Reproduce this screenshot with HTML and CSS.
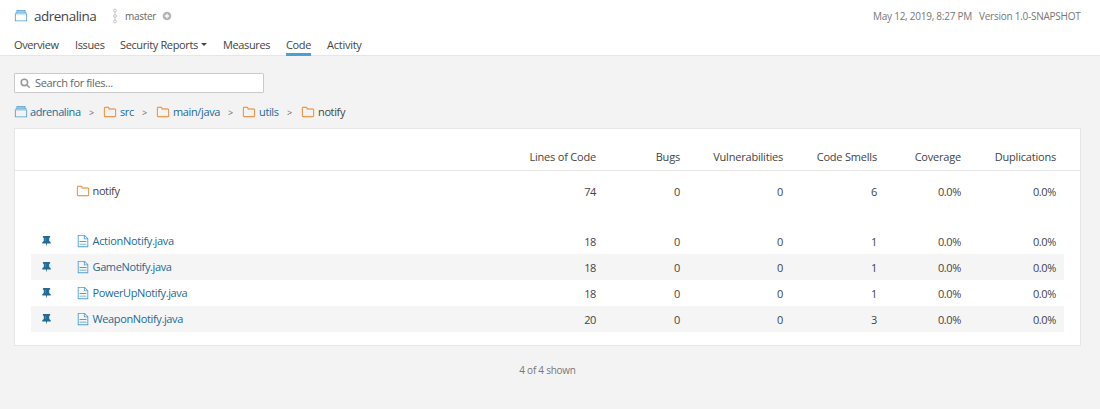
FILE: index.html
```html
<!DOCTYPE html>
<html lang="en">
<head>
<meta charset="utf-8">
<title>adrenalina - Code</title>
<link rel="stylesheet" href="styles.css">
</head>
<body>
<svg width="0" height="0" class="defs">
  <symbol id="project" viewBox="0 0 16 16"><path fill="currentColor" d="M14.985 13.988L1 14.005 1.02 5h13.966v8.988h-.001zM1.998 5.995l.006 7.02L14.022 13 14 6.004l-12.002-.009zM3 4.5V4h9.996l.004.5h1l-.005-1.497-11.98.003L2 4.5h1zm1-2v-.504h8.002L12 2.5h.996l-.003-1.495-10.019.002L3 2.5h1z"/><path fill="currentColor" fill-opacity=".4" d="M3 2h10v2H3z"/></symbol>
  <symbol id="folder" viewBox="0 0 16 16"><path fill="currentColor" d="M14 12.286V5.703a.673.673 0 0 0-.195-.5.694.694 0 0 0-.5-.203H7.014a.694.694 0 0 1-.5-.203.686.686 0 0 1-.203-.5v-.6a.686.686 0 0 0-.203-.5.694.694 0 0 0-.5-.197H2.703a.694.694 0 0 0-.5.203.673.673 0 0 0-.203.5v8.583c0 .196.067.363.203.5.136.136.302.203.5.203h10.602a.694.694 0 0 0 .5-.203.673.673 0 0 0 .195-.5zM15 5.703v6.583c0 .466-.167.867-.5 1.2-.334.333-.735.5-1.203.5H2.703c-.468 0-.869-.167-1.203-.5a1.64 1.64 0 0 1-.5-1.200V3.703c0-.469.167-.871.5-1.203.334-.333.735-.5 1.203-.5h2.905c.469 0 .87.167 1.204.5.333.332.5.734.5 1.203V4h5.985c.468 0 .869.167 1.203.5.333.334.5.735.5 1.203z"/></symbol>
  <symbol id="file" viewBox="0 0 16 16"><path fill="currentColor" d="M14 15H2V1.010h7.970L14 5.003V15zM9 2H3v12h10V6H9V2zm3 9v1H4v-1h8zm0-3v1H4V8h8zM10 2.200V5h2.800L10 2.200z" fill-rule="evenodd"/></symbol>
  <symbol id="pin" viewBox="0 0 10 12"><path fill="currentColor" d="M1 0h8v1.700H8v3.800l1.700 1.300v1.400H5.600L5 11.500l-.6-3.300H.3V6.800L2 5.500V1.700H1z"/><path stroke="#fff" stroke-opacity=".35" stroke-width=".6" d="M4 2v3.500"/></symbol>
</svg>
<header class="header">
  <div class="top">
    <svg class="icon blue"><use href="#project"/></svg>
    <h1 class="title">adrenalina</h1>
    <svg class="branch" viewBox="0 0 6 16"><g fill="none" stroke="#c4c4c4"><circle cx="3" cy="2.500" r="1.400"/><circle cx="3" cy="8" r="1.400"/><circle cx="3" cy="13.500" r="1.400"/><path d="M3 4v2.500M3 9.500V12"/></g></svg>
    <span class="master">master</span>
    <svg class="plus" viewBox="0 0 10 10"><circle cx="5" cy="5" r="4.300" fill="#b4b4b4"/><path stroke="#fff" stroke-width="1.300" d="M5 2.800v4.400M2.800 5h4.400"/></svg>
    <span class="date">May 12, 2019, 8:27 PM</span>
    <span class="version">Version 1.0-SNAPSHOT</span>
  </div>
  <nav class="nav">
    <a class="n-overview">Overview</a><a class="n-issues">Issues</a><a class="n-reports">Security Reports<i class="caret"></i></a><a class="n-measures">Measures</a><a class="n-code active">Code</a><a class="n-activity">Activity</a>
  </nav>
</header>
<main class="main">
  <div class="search">
    <svg class="lens" viewBox="0 0 12 12"><g fill="none" stroke="#999" stroke-width="1.700"><circle cx="4.800" cy="4.800" r="3.500"/><path d="M7.400 7.400l3.200 3.200"/></g></svg>
    <span>Search for files...</span>
  </div>
  <div class="crumbs">
    <svg class="icon blue"><use href="#project"/></svg><a class="c-project">adrenalina</a><span class="sep">&gt;</span>
    <svg class="icon orange"><use href="#folder"/></svg><a class="c-src">src</a><span class="sep">&gt;</span>
    <svg class="icon orange"><use href="#folder"/></svg><a class="c-java">main/java</a><span class="sep">&gt;</span>
    <svg class="icon orange"><use href="#folder"/></svg><a class="c-utils">utils</a><span class="sep">&gt;</span>
    <svg class="icon orange"><use href="#folder"/></svg><span>notify</span>
  </div>
  <section class="panel">
    <div class="row head"><span></span><span></span><b>Lines of Code</b><b>Bugs</b><b>Vulnerabilities</b><b>Code Smells</b><b>Coverage</b><b>Duplications</b></div>
    <div class="row folder"><span></span><span class="name"><svg class="icon orange"><use href="#folder"/></svg>notify</span><b>74</b><b>0</b><b>0</b><b>6</b><b>0.0%</b><b>0.0%</b></div>
    <div class="row"><svg class="pin"><use href="#pin"/></svg><a class="name action"><svg class="icon blue"><use href="#file"/></svg>ActionNotify.java</a><b>18</b><b>0</b><b>0</b><b>1</b><b>0.0%</b><b>0.0%</b></div>
    <div class="row stripe"><svg class="pin"><use href="#pin"/></svg><a class="name"><svg class="icon blue"><use href="#file"/></svg>GameNotify.java</a><b>18</b><b>0</b><b>0</b><b>1</b><b>0.0%</b><b>0.0%</b></div>
    <div class="row"><svg class="pin"><use href="#pin"/></svg><a class="name"><svg class="icon blue"><use href="#file"/></svg>PowerUpNotify.java</a><b>18</b><b>0</b><b>0</b><b>1</b><b>0.0%</b><b>0.0%</b></div>
    <div class="row stripe"><svg class="pin"><use href="#pin"/></svg><a class="name"><svg class="icon blue"><use href="#file"/></svg>WeaponNotify.java</a><b>20</b><b>0</b><b>0</b><b>3</b><b>0.0%</b><b>0.0%</b></div>
  </section>
  <div class="shown">4 of 4 shown</div>
</main>
</body>
</html>
```

FILE: styles.css
```css
* { box-sizing: border-box; }
body { margin: 0; height: 409px; overflow: hidden; background: #f3f3f3; color: #444; font: 11px/16px "Open Sans", "Noto Sans", sans-serif; letter-spacing: -.37px; white-space: nowrap; }
.defs { display: block; position: absolute; }
svg { display: block; flex: none; }
.icon { width: 14px; height: 14px; }
.blue { color: #4b9fd5; }
.orange { color: #ed7d20; }
a { color: #236a97; }
.header { height: 56px; background: #fff; border-bottom: 1px solid #e6e6e6; }
.top { display: flex; align-items: center; height: 32px; padding: 0 19px 0 14px; }
.title { width: 79px; margin: 0 0 0 6px; font-size: 13.5px; font-weight: 400; letter-spacing: -.5px; line-height: 20px; }
.branch { width: 6px; height: 16px; margin-right: 7px; margin-left: -1px; }
.master { width: 37px; font-size: 10px; letter-spacing: -.3px; color: #666; }
.plus { width: 10px; height: 10px; }
.date, .version { font-size: 10px; letter-spacing: -.25px; color: #777; }
.date { margin-left: auto; width: 99px; margin-right: 7px; }
.version { width: 102px; }
.nav { display: flex; gap: 16px; height: 24px; padding-left: 14px; }
.nav a { height: 24px; padding-top: 5px; color: #444; border-bottom: 3px solid transparent; }
.nav .active { border-color: #4b9fd5; }
.n-overview { width: 45px; }
.n-issues { width: 29px; }
.n-reports { display: flex; width: 87px; justify-content: space-between; }
.n-measures { width: 47px; }
.n-code { width: 25px; }
.nav .n-activity { letter-spacing: -.25px; }
.caret { width: 6px; height: 3px; margin-top: 6px; border: 3px solid transparent; border-top-color: #444; border-bottom: 0; }
.main { padding: 17px 19px 0 14px; }
.search { display: flex; align-items: center; width: 250px; height: 20px; padding-left: 5px; background: #fff; border: 1px solid #cacaca; color: #666; border-radius: 1px; }
.lens { width: 11px; height: 11px; margin-right: 4px; }
.crumbs { display: flex; align-items: center; height: 16px; margin-top: 11px; }
.crumbs .icon { margin: 0 3px 0 -1px; }
.crumbs .icon.blue { margin: 0 2px 0 0; }
.sep { width: 23px; padding: 1px 0 0 8px; font-size: 9px; color: #666; letter-spacing: 0; }
.c-project { width: 51px; letter-spacing: -.42px; }
.c-src { width: 14px; }
.c-java { width: 47px; }
.c-utils { width: 20px; }
.panel { height: 218px; margin-top: 8px; background: #fff; border: 1px solid #e6e6e6; }
.row { display: grid; grid-template-columns: 46px 423px 96px 84px 103px 94px 84px 95px; align-items: center; height: 26px; margin: 0 16px; }
.row b { padding-top: 1px; font-weight: 400; text-align: right; }
.head { height: 42px; margin: 0; padding: 14px 0 0 16px; border-bottom: 1px solid #e6e6e6; }
.row.head b { padding: 0; font-weight: 500; letter-spacing: -.2px; }
.folder { height: 40px; margin-bottom: 17px; }
.stripe { background: #f5f5f5; }
.name { display: flex; align-items: center; }
.name .icon { margin: 0 2.5px 0 -1px; }
.action { letter-spacing: -.3px; }
.pin { width: 9px; height: 11px; margin-left: 10.5px; color: #236a97; }
.shown { margin-top: 16px; font-size: 10px; letter-spacing: -.25px; text-align: center; color: #777; }
```
